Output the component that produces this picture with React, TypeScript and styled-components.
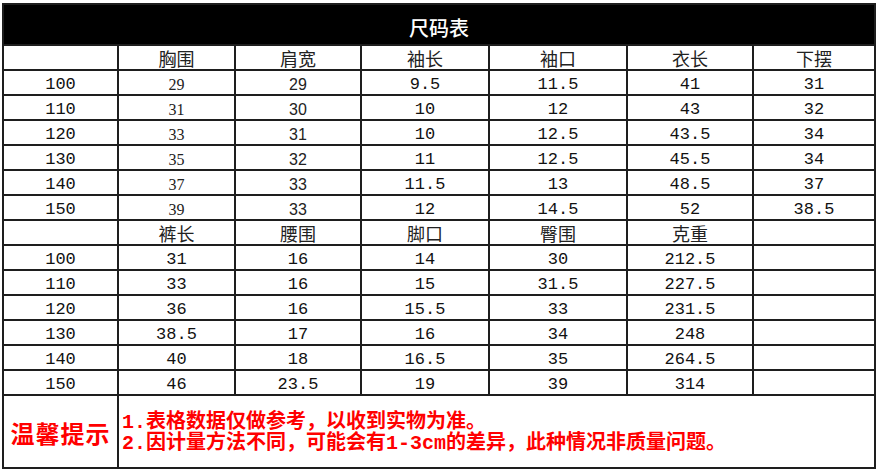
import React from 'react'
import styled, { createGlobalStyle } from 'styled-components'

type Face = 'mono' | 'serif' | 'sans' | 'cjk'

const topHead = ['', '胸围', '肩宽', '袖长', '袖口', '衣长', '下摆']
const topRows = [
	['100', '29', '29', '9.5', '11.5', '41', '31'],
	['110', '31', '30', '10', '12', '43', '32'],
	['120', '33', '31', '10', '12.5', '43.5', '34'],
	['130', '35', '32', '11', '12.5', '45.5', '34'],
	['140', '37', '33', '11.5', '13', '48.5', '37'],
	['150', '39', '33', '12', '14.5', '52', '38.5'],
]
const bottomHead = ['', '裤长', '腰围', '脚口', '臀围', '克重', '']
const bottomRows = [
	['100', '31', '16', '14', '30', '212.5', ''],
	['110', '33', '16', '15', '31.5', '227.5', ''],
	['120', '36', '16', '15.5', '33', '231.5', ''],
	['130', '38.5', '17', '16', '34', '248', ''],
	['140', '40', '18', '16.5', '35', '264.5', ''],
	['150', '46', '23.5', '19', '39', '314', ''],
]

// the first size table mixes fonts per column, as the source sheet did
const topFaces: Face[] = ['mono', 'serif', 'sans', 'mono', 'mono', 'mono', 'mono']

const faces: Record<Face, string> = {
	mono: `'Liberation Mono', 'Noto Sans CJK SC', monospace`,
	serif: `'Liberation Serif', 'Noto Sans CJK SC', serif`,
	sans: `'Liberation Sans', 'Noto Sans CJK SC', sans-serif`,
	cjk: `'Noto Sans CJK SC', sans-serif`,
}
const sizes: Record<Face, number> = { mono: 17, serif: 16, sans: 16, cjk: 18 }

export default function App() {
	return (
		<>
			<GlobalStyle />
			<Sheet>
				<Title>尺码表</Title>
				{topHead.map((h, i) => (
					<Cell key={`th${i}`} $face="cjk">
						{h}
					</Cell>
				))}
				{topRows.map((row, r) =>
					row.map((v, c) => (
						<Cell key={`t${r}-${c}`} $face={topFaces[c]}>
							{v}
						</Cell>
					)),
				)}
				{bottomHead.map((h, i) => (
					<Cell key={`bh${i}`} $face="cjk">
						{h}
					</Cell>
				))}
				{bottomRows.map((row, r) =>
					row.map((v, c) => (
						<Cell key={`b${r}-${c}`} $face="mono">
							{v}
						</Cell>
					)),
				)}
				<NoteLabel>温馨提示</NoteLabel>
				<NoteBody>
					<NoteLine>1.表格数据仅做参考，以收到实物为准。</NoteLine>
					<NoteLine>2.因计量方法不同，可能会有1-3cm的差异，此种情况非质量问题。</NoteLine>
				</NoteBody>
			</Sheet>
		</>
	)
}

const GlobalStyle = createGlobalStyle`
	html, body {
		margin: 0;
		padding: 0;
		background: #fff;
	}
	body {
		font-family: 'Noto Sans CJK SC', sans-serif;
	}
`

const Sheet = styled.div`
	display: grid;
	grid-template-columns: 113px 115px 124px 126px 136px 124px 120px;
	grid-template-rows: 39px repeat(14, 23px) 71px;
	gap: 2px;
	padding: 2px;
	margin: 3px 0 0 2px;
	width: max-content;
	background: #1e1e1e;
`

const Title = styled.div`
	grid-column: 1 / -1;
	display: flex;
	align-items: center;
	justify-content: center;
	padding-top: 5px;
	background: #000;
	color: #fff;
	font-family: 'Noto Sans CJK SC', sans-serif;
	font-size: 20px;
	font-weight: 500;
`

const Cell = styled.div<{ $face: Face }>`
	display: flex;
	align-items: center;
	justify-content: center;
	padding-top: ${(p) => (p.$face === 'cjk' ? 1 : 4)}px;
	background: #fff;
	color: ${(p) => (p.$face === 'mono' ? '#111' : '#222')};
	font-family: ${(p) => faces[p.$face]};
	font-size: ${(p) => sizes[p.$face]}px;
	line-height: 1;
	white-space: nowrap;
`

const NoteLabel = styled.div`
	display: flex;
	align-items: center;
	justify-content: center;
	padding-top: 2px;
	background: #fff;
	color: #ff0000;
	font-family: 'Noto Sans CJK SC', sans-serif;
	font-size: 24px;
	font-weight: 700;
	letter-spacing: 1px;
`

const NoteBody = styled.div`
	grid-column: 2 / -1;
	display: flex;
	flex-direction: column;
	justify-content: center;
	padding: 3px 0 0 3px;
	background: #fff;
	color: #ff0000;
	font-family: 'Liberation Mono', 'Noto Sans CJK SC', monospace;
	font-size: 20px;
	font-weight: 700;
`

const NoteLine = styled.div`
	line-height: 21px;
	white-space: nowrap;
`
